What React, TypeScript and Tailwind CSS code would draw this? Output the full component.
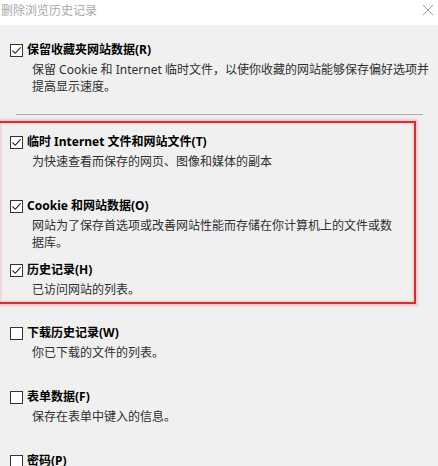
import React from 'react';

type Item = {
  label: string;
  lines: string[];
  checked: boolean;
};

const Checkbox: React.FC<{ checked: boolean }> = ({ checked }) => (
  <span className="flex h-[13px] w-[13px] shrink-0 items-center justify-center border border-[#333333] bg-white">
    {checked && (
      <svg width="11" height="11" viewBox="0 0 11 11" fill="none">
        <path d="M1.5 5.5 L4.2 8.3 L9.6 2.4" stroke="#222222" strokeWidth="1.1" />
      </svg>
    )}
  </span>
);

const Row: React.FC<{ item: Item; fixed?: boolean }> = ({ item, fixed = true }) => (
  <div className={fixed ? 'h-[64px]' : ''}>
    <div className="flex h-[18px] items-center gap-[4px]">
      <Checkbox checked={item.checked} />
      <span className="text-[12px] font-bold leading-[18px] text-black">{item.label}</span>
    </div>
    {item.lines.length > 0 && (
      <div className="mt-[2px] pl-[22px] text-[12px] leading-[17px] text-[#2e2e2e]">
        {item.lines.map((line, i) => (
          <div key={i} className="whitespace-nowrap">
            {line}
          </div>
        ))}
      </div>
    )}
  </div>
);

const boxed: Item[] = [
  { label: '临时 Internet 文件和网站文件(T)', lines: ['为快速查看而保存的网页、图像和媒体的副本'], checked: true },
  {
    label: 'Cookie 和网站数据(O)',
    lines: ['网站为了保存首选项或改善网站性能而存储在你计算机上的文件或数', '据库。'],
    checked: true,
  },
  { label: '历史记录(H)', lines: ['已访问网站的列表。'], checked: true },
];

const rest: Item[] = [
  { label: '下载历史记录(W)', lines: ['你已下载的文件的列表。'], checked: false },
  { label: '表单数据(F)', lines: ['保存在表单中键入的信息。'], checked: false },
  { label: '密码(P)', lines: [], checked: false },
];

export default function App() {
  return (
    <div
      className="h-[466px] w-[438px] overflow-hidden bg-[#f0f0f0]"
      style={{ fontFamily: '"Noto Sans", "Noto Sans CJK SC", sans-serif' }}
    >
      <div className="flex h-[25px] items-center justify-between bg-white pl-[1px] pr-[4px]">
        <span className="-mt-[4px] text-[12px] leading-[18px] text-[#a8a8a8]">删除浏览历史记录</span>
        <svg width="12" height="12" viewBox="0 0 12 12" className="-mt-[6px]">
          <path d="M1 1 L11 11 M11 1 L1 11" stroke="#9a9a9a" strokeWidth="1" />
        </svg>
      </div>

      <div className="pl-[10px] pt-[16px]">
        <Row
          fixed={false}
          item={{
            label: '保留收藏夹网站数据(R)',
            lines: ['保留 Cookie 和 Internet 临时文件，以使你收藏的网站能够保存偏好选项并', '提高显示速度。'],
            checked: true,
          }}
        />

        <div className="ml-[6px] mt-[19px] h-px w-[407px] bg-[#a9a9a9]" />

        <div className="-ml-[12px] mt-[6px] w-[418px] border-2 border-[#c9333a] pb-[4px] pl-[10px] pt-[10px] shadow-[0_0_2px_2px_rgba(244,170,170,0.6),inset_0_0_2px_1px_rgba(244,170,170,0.6)]">
          {boxed.map((item, i) => (
            <Row key={i} item={item} fixed={i < boxed.length - 1} />
          ))}
        </div>

        <div className="mt-[20px]">
          {rest.map((item, i) => (
            <Row key={i} item={item} />
          ))}
        </div>
      </div>
    </div>
  );
}
